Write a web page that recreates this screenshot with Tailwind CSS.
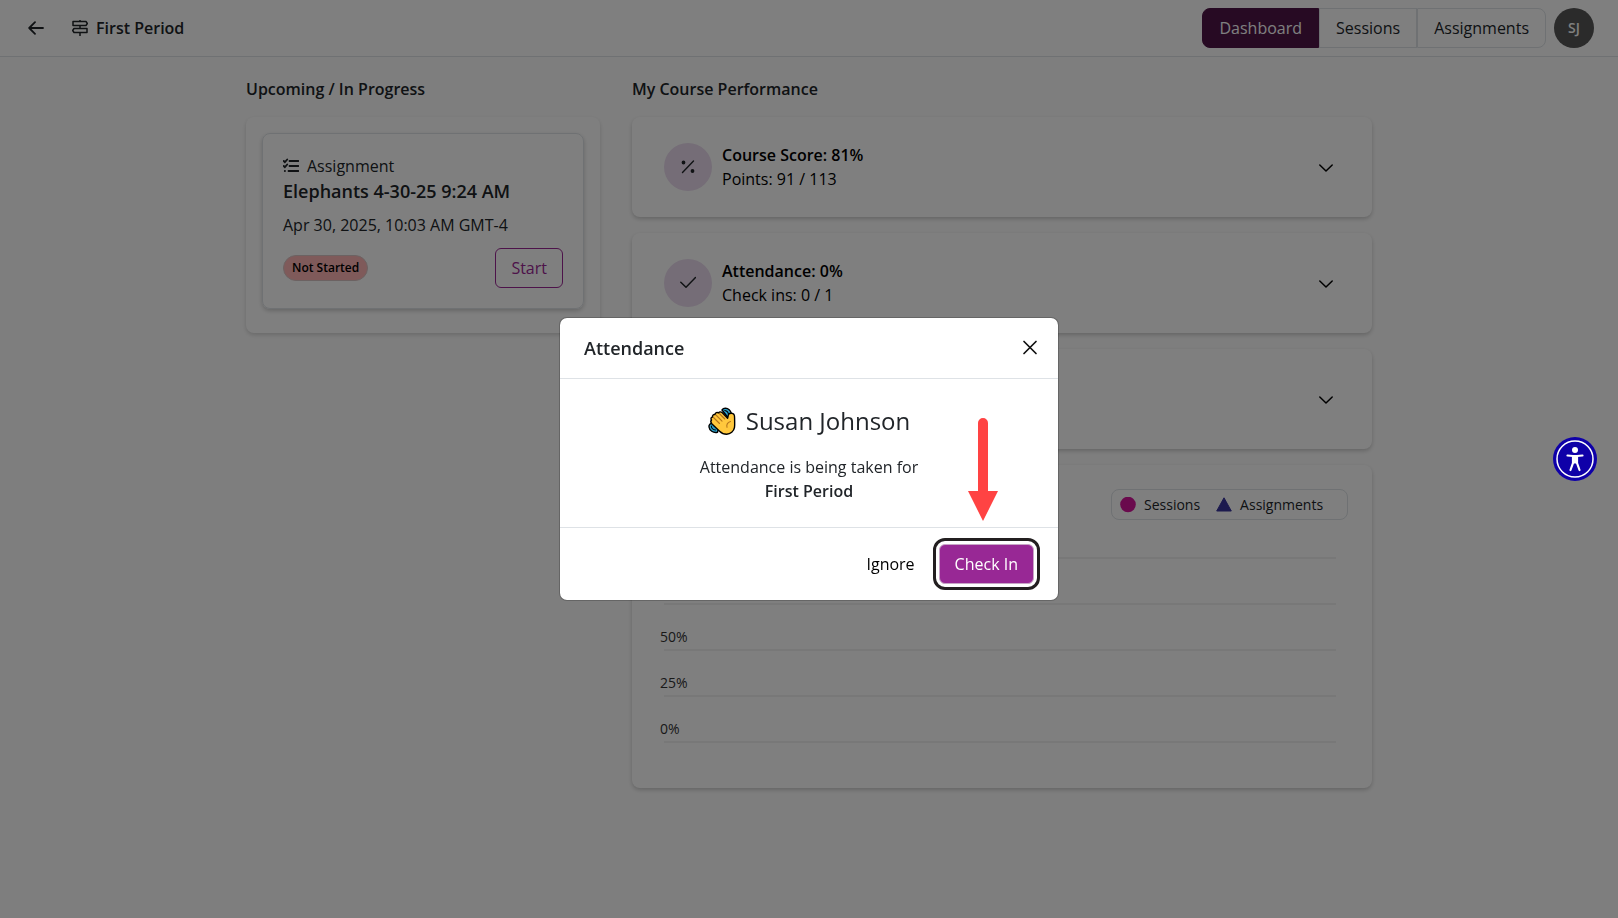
<!DOCTYPE html>
<html lang="en">
<head>
  <meta charset="UTF-8" />
  <meta name="viewport" content="width=device-width, initial-scale=1.0" />
  <title>First Period - Dashboard</title>
  <script src="https://cdn.jsdelivr.net/npm/@tailwindcss/browser@4"></script>
</head>
<body class="min-h-screen bg-[#fdfdfd] font-['Open_Sans','Noto_Sans',sans-serif] text-base text-[#212529]">

  <!-- Top bar -->
  <header class="flex items-center justify-between border-b border-[#dee2e6] bg-white py-2 pr-6 pl-7">
    <div class="flex items-center">
      <a href="#" aria-label="Back" class="mr-7">
        <svg class="size-4" viewBox="0 0 16 16" fill="none" stroke="currentColor" stroke-width="1.8" stroke-linecap="round" stroke-linejoin="round"><path d="M15 8H1.5M7 2.2 1.2 8 7 13.8" /></svg>
      </a>
      <svg class="mr-2 size-4" viewBox="0 0 16 16" fill="none" stroke="currentColor" stroke-width="1.5" stroke-linejoin="round"><path d="M8 0v1.5M8 5.5v3M8 12.5V16M1 1.5h13L15.3 3.5 14 5.5H1zM15 8.5H2L.7 10.5l1.3 2H15z" /></svg>
      <h1 class="font-semibold">First Period</h1>
    </div>
    <div class="flex items-center gap-2">
      <nav class="flex h-10 leading-[38px]">
        <a href="#" class="rounded-l-lg border border-[#4e1446] bg-[#4e1446] px-4 text-white">Dashboard</a>
        <a href="#" class="border border-[#dee2e6] px-4">Sessions</a>
        <a href="#" class="rounded-r-lg border border-[#dee2e6] px-4">Assignments</a>
      </nav>
      <button class="size-10 rounded-full bg-[#565656] text-sm font-semibold text-white">SJ</button>
    </div>
  </header>

  <main class="mx-auto grid max-w-[1126px] grid-cols-3 items-start gap-8 pt-5">

    <!-- Upcoming -->
    <section>
      <h2 class="mb-4 font-semibold">Upcoming / In Progress</h2>
      <div class="rounded-lg bg-white px-4 pt-4 pb-6 shadow-[0_2px_4px_rgba(0,0,0,0.16)]">
        <article class="rounded-lg border border-[#dee2e6] p-5 shadow-[0_2px_4px_rgba(0,0,0,0.2)]">
          <div class="flex items-center gap-2">
            <svg class="size-4" viewBox="0 0 16 16" fill="none" stroke="currentColor" stroke-width="1.8" stroke-linecap="round"><path d="M6.5 3h9M6.5 8h9M5.5 13h10M.7 3l1.2 1.2L4.2 1.5M.7 8l1.2 1.2L4.2 6.5M1.8 13h.2" /></svg>
            <span>Assignment</span>
          </div>
          <h3 class="text-lg/[27px] font-semibold">Elephants 4-30-25 9:24 AM</h3>
          <p class="mt-2">Apr 30, 2025, 10:03 AM GMT-4</p>
          <div class="mt-[11px] flex items-center justify-between">
            <span class="rounded-full border border-[#d8c4c4] bg-[#ffb5b5] px-2 text-xs/6 font-semibold text-black">Not Started</span>
            <button class="h-10 rounded-md border border-[#9b2794] px-[15px] text-[#9b2794]">Start</button>
          </div>
        </article>
      </div>
    </section>

    <!-- Performance -->
    <section class="col-span-2">
      <h2 class="mb-4 font-semibold">My Course Performance</h2>
      <div class="flex flex-col gap-4">

        <button class="flex h-[100px] items-center gap-2.5 rounded-lg bg-white pr-[38px] pl-8 text-left text-black shadow-[0_2px_4px_rgba(0,0,0,0.2)]">
          <span class="grid size-12 place-items-center rounded-full bg-[#eadbee]">
            <svg class="size-4" viewBox="0 0 16 16" fill="none" stroke="#212529" stroke-width="1.4" stroke-linecap="round"><path d="M2.5 13.5 13.5 2" /><circle cx="3.5" cy="3.5" r="1.2" fill="#212529" /><circle cx="12.5" cy="12" r="1.2" fill="#212529" /></svg>
          </span>
          <span class="flex-1">
            <span class="block font-semibold">Course Score: 81%</span>
            <span class="block">Points: 91 / 113</span>
          </span>
          <svg class="size-4" viewBox="0 0 16 16" fill="none" stroke="currentColor" stroke-width="1.5" stroke-linecap="round" stroke-linejoin="round"><path d="M1.8 6 8 12l6.200-6" /></svg>
        </button>

        <button class="flex h-[100px] items-center gap-2.5 rounded-lg bg-white pr-[38px] pl-8 text-left text-black shadow-[0_2px_4px_rgba(0,0,0,0.2)]">
          <span class="grid size-12 place-items-center rounded-full bg-[#eadbee]">
            <svg class="size-4" viewBox="0 0 16 16" fill="none" stroke="#212529" stroke-width="1.5" stroke-linecap="round" stroke-linejoin="round"><path d="M.8 7.3 6 12.3 15.500 2.500" /></svg>
          </span>
          <span class="flex-1">
            <span class="block font-semibold">Attendance: 0%</span>
            <span class="block">Check ins: 0 / 1</span>
          </span>
          <svg class="size-4" viewBox="0 0 16 16" fill="none" stroke="currentColor" stroke-width="1.5" stroke-linecap="round" stroke-linejoin="round"><path d="M1.8 6 8 12l6.200-6" /></svg>
        </button>

        <button aria-label="Show more" class="flex h-[100px] items-center justify-end rounded-lg bg-white pr-[38px] pl-8 text-black shadow-[0_2px_4px_rgba(0,0,0,0.2)]">
          <svg class="size-4" viewBox="0 0 16 16" fill="none" stroke="currentColor" stroke-width="1.5" stroke-linecap="round" stroke-linejoin="round"><path d="M1.8 6 8 12l6.200-6" /></svg>
        </button>

        <!-- Chart -->
        <div class="rounded-lg bg-white px-7 pt-6 pb-[45px] shadow-[0_2px_4px_rgba(0,0,0,0.2)]">
          <div class="-mr-1 ml-auto flex h-[31px] w-[237px] items-center rounded-lg border border-[#dee2e6] pl-2 text-sm">
            <svg class="mr-2 size-4" viewBox="0 0 16 16"><circle cx="8" cy="7.500" r="7.800" fill="#d4149a" /></svg>
            <span class="mr-4">Sessions</span>
            <svg class="mr-2 size-4" viewBox="0 0 16 16" fill="#38349c" stroke="#38349c" stroke-linejoin="round"><path d="M8 .8 15.300 14H.7z" /></svg>
            <span>Assignments</span>
          </div>
          <ul class="text-sm text-[#333]">
            <li class="flex h-[39px] flex-col justify-end gap-0.5"><span class="h-5">100%</span><span class="mr-2 ml-1 h-[2px] bg-[#f1f1f1]"></span></li>
            <li class="flex h-[46px] flex-col justify-end gap-0.5"><span class="h-5">75%</span><span class="mr-2 ml-1 h-[2px] bg-[#f1f1f1]"></span></li>
            <li class="flex h-[46px] flex-col justify-end gap-0.5"><span class="h-5">50%</span><span class="mr-2 ml-1 h-[2px] bg-[#f1f1f1]"></span></li>
            <li class="flex h-[46px] flex-col justify-end gap-0.5"><span class="h-5">25%</span><span class="mr-2 ml-1 h-[2px] bg-[#f1f1f1]"></span></li>
            <li class="flex h-[46px] flex-col justify-end gap-0.5"><span class="h-5">0%</span><span class="mr-2 ml-1 h-[2px] bg-[#f1f1f1]"></span></li>
          </ul>
        </div>
      </div>
    </section>
  </main>

  <!-- Attendance modal -->
  <div class="fixed inset-0 z-10 flex items-center justify-center bg-black/50">
    <div role="dialog" aria-labelledby="modalTitle" class="relative w-[500px] rounded-lg border border-black/20 bg-white bg-clip-padding">
      <div class="flex h-[61px] items-center justify-between border-b border-[#dee2e6] pr-5 pl-6">
        <h2 id="modalTitle" class="text-lg font-semibold">Attendance</h2>
        <button aria-label="Close">
          <svg class="size-4" viewBox="0 0 16 16" fill="none" stroke="#111" stroke-width="1.7" stroke-linecap="round"><path d="M2 1.5 14 13.5M14 1.5 2 13.5" /></svg>
        </button>
      </div>
      <div class="p-6 text-center">
        <div class="mb-4 flex items-center justify-center gap-2.5 text-2xl/9">
          <!-- waving hand -->
          <svg class="size-7" viewBox="0 0 28 28" stroke="#000" stroke-width="1.4" stroke-linecap="round" stroke-linejoin="round">
            <path d="M14 3C15.500.8 19 .8 21.200 2.700c2 1.800 2.600 4.300 1.800 7.300L19.500 10zM5 16.500c-2.800-.6-4.300 1.200-4 3.500.4 3.400 4 6.200 8.500 5.300l1-3.800z" fill="#2ba3cf" />
            <path d="M16.800 3.500c2.200.4 3.600 2 3.800 4.500M3.300 19c.2 2.200 1.700 3.700 4.200 4" fill="none" stroke-width="1.1" />
            <path d="M3.500 13c-1.100-1.200-.4-3 1.100-3-.5-1.800 1-3 2.500-2.400.1-1.900 2-2.700 3.400-1.700 1-1.500 2.600-1.200 3.800-.1l5.300 5.400c.6-1.400.3-2.600 1.200-4 1-1.400 4.200-1.200 5.200.3.700 1.200.6 2.600.6 4 0 3 .3 5.800-.1 8.900-.6 3.900-4.100 6.800-7.900 6.800-2.700 0-5-1-7-3l-7.600-7.200c-1-1.100-1.700-2.800-.5-4z" fill="#ffc83d" />
            <path d="m5.500 10.500 6 6M8 8l6 6.200M11.300 6.500l5.500 5.500M22.500 14.500c-2.800.7-4.300 3-3.500 5.800" fill="none" stroke="#b5761c" stroke-width="1.100" />
          </svg>
          <span>Susan Johnson</span>
        </div>
        <p>Attendance is being taken for</p>
        <p class="font-semibold">First Period</p>
      </div>
      <div class="flex h-[73px] items-center justify-end gap-2 border-t border-[#dee2e6] px-6">
        <button class="h-10 px-4 text-black">Ignore</button>
        <button class="h-10 rounded-md border border-[#c9a5c7] bg-[#982895] px-[15px] text-white outline-3 outline-offset-3 outline-[#231f20]">Check In</button>
      </div>

      <!-- pointer to the check in button -->
      <svg class="absolute right-[60px] bottom-[79px] h-[103px] w-[30px]" viewBox="0 0 30 103" fill="#ff4343"><path d="M10 5a5 5 0 0 1 10 0v68h10L15 103 0 73h10z" /></svg>
    </div>
  </div>

  <!-- Accessibility widget -->
  <button aria-label="Accessibility" class="fixed top-1/2 right-[21px] z-20 size-11 -translate-y-1/2">
    <svg viewBox="0 0 44 44"><circle cx="22" cy="22" r="22" fill="#0f00a8" /><circle cx="22" cy="22" r="18" fill="none" stroke="#fff" stroke-width="1.5" /><circle cx="22" cy="13" r="3" fill="#fff" /><path d="M14.500 18.500 20 19v7l-2.500 7M29.500 18.500 24 19v7l2.500 7" fill="none" stroke="#fff" stroke-width="2.200" stroke-linecap="round" stroke-linejoin="round" /><path d="M19.500 18h5v8.500h-5z" fill="#fff" /></svg>
  </button>

</body>
</html>
